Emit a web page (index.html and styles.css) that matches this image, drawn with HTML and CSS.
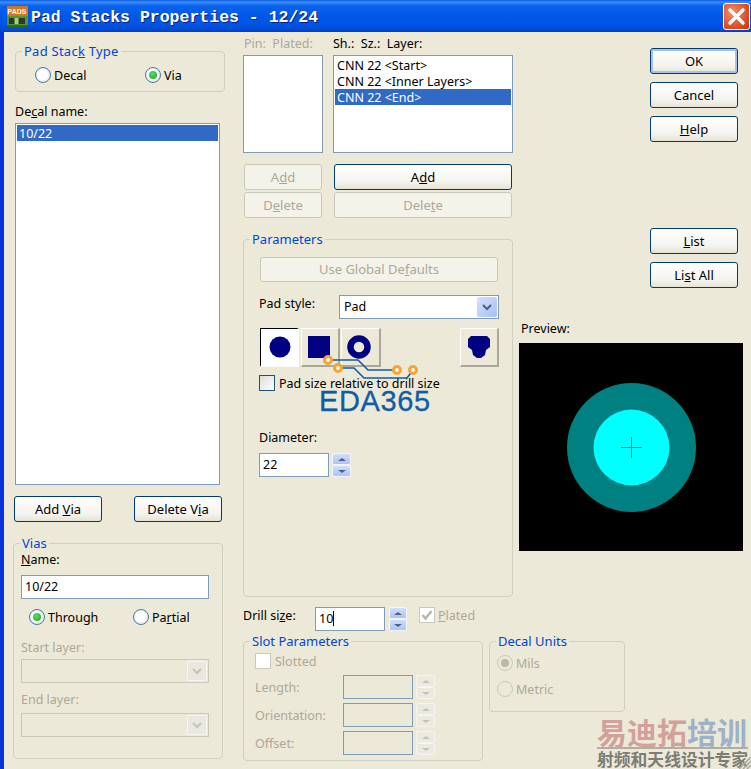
FILE: index.html
```html
<!DOCTYPE html>
<html lang="en">
<head>
<meta charset="utf-8">
<title>Pad Stacks Properties</title>
<link rel="stylesheet" href="styles.css">
</head>
<body>
<div class="window">
  <header class="titlebar">
    <svg class="app-icon" width="21" height="21" viewBox="0 0 21 21">
      <rect width="21" height="21" fill="#c8641a"/>
      <rect y="0" width="21" height="10" fill="#d8741c"/>
      <text x="0.5" y="8" class="app-icon-text">PADS</text>
      <rect x="0" y="10" width="21" height="11" fill="#4f9a2c"/>
      <rect x="2" y="12" width="5" height="6" fill="#333"/>
      <rect x="8" y="12" width="3" height="6" fill="#bbb"/>
      <rect x="12" y="12" width="6" height="6" fill="#333"/>
      <rect x="0" y="19" width="21" height="2" fill="#2c6a18"/>
    </svg>
    <h1 class="title">Pad Stacks Properties - 12/24</h1>
    <div class="close">
      <svg width="19" height="19" viewBox="0 0 19 19"><path d="M3 3 L16 16 M16 3 L3 16" stroke="#fff" stroke-width="3.4" stroke-linecap="round"/></svg>
    </div>
  </header>

  <main class="client">
    <section class="col-left">
      <div class="group type-group">
        <span class="legend legend-wide">Pad Stac<u>k</u> Type</span>
        <div class="radio-row">
          <label class="option type-option"><span class="radio"></span>Decal</label>
          <label class="option"><span class="radio on"></span>Via</label>
        </div>
      </div>
      <div class="lbl decal-label">De<u>c</u>al name:</div>
      <div class="list decal-list"><div class="item selected">10/22</div></div>
      <div class="via-buttons">
        <button class="btn via-btn">Add <u>V</u>ia</button>
        <button class="btn via-btn">Delete V<u>i</u>a</button>
      </div>
      <div class="group vias-group">
        <span class="legend">Vias</span>
        <div class="lbl"><u>N</u>ame:</div>
        <div class="input via-name">10/22</div>
        <div class="radio-row through-row">
          <label class="option through-option"><span class="radio on"></span>Throu<u>g</u>h</label>
          <label class="option"><span class="radio"></span>Pa<u>r</u>tial</label>
        </div>
        <div class="lbl off start-label">Start layer:</div>
        <div class="combo combo-off layer-combo"><span class="drop drop-off"><svg width="10" height="7" viewBox="0 0 10 7"><path d="M1 1 L5 5 L9 1" fill="none" stroke="#c4c2b8" stroke-width="2"/></svg></span></div>
        <div class="lbl off end-label">End layer:</div>
        <div class="combo combo-off layer-combo end-combo"><span class="drop drop-off"><svg width="10" height="7" viewBox="0 0 10 7"><path d="M1 1 L5 5 L9 1" fill="none" stroke="#c4c2b8" stroke-width="2"/></svg></span></div>
      </div>
    </section>

    <section class="col-mid">
      <div class="heads">
        <span class="lbl lbl-low off pin-head">Pin: &nbsp;Plated:</span>
        <span class="lbl lbl-low">Sh.: &nbsp;Sz.: &nbsp;Layer:</span>
      </div>
      <div class="lists">
        <div class="list pin-list"></div>
        <div class="list layer-list">
          <div class="item">CNN 22 &lt;Start&gt;</div>
          <div class="item">CNN 22 &lt;Inner Layers&gt;</div>
          <div class="item selected">CNN 22 &lt;End&gt;</div>
        </div>
      </div>
      <div class="stack-buttons">
        <button class="btn btn-off">A<u>d</u>d</button>
        <button class="btn">A<u>d</u>d</button>
        <button class="btn btn-off">D<u>e</u>lete</button>
        <button class="btn btn-off">Dele<u>t</u>e</button>
      </div>

      <div class="group params">
        <span class="legend">Parameters</span>
        <button class="btn btn-off global-btn">Use Global De<u>f</u>aults</button>
        <div class="pad-style">
          <span class="lbl lbl-low pad-style-label">Pad style:</span>
          <div class="combo pad-combo">Pad<span class="drop"><svg width="10" height="7" viewBox="0 0 10 7"><path d="M1 1 L5 5 L9 1" fill="none" stroke="#4d6185" stroke-width="2"/></svg></span></div>
        </div>
        <div class="pad-shapes">
          <span class="pad pressed"><svg class="shape-circle" width="22" height="22" viewBox="0 0 22 22"><circle cx="11" cy="11" r="10.5" fill="#000080"/></svg></span>
          <span class="pad"><svg class="shape-square" width="22" height="22" viewBox="0 0 22 22"><rect width="22" height="22" fill="#000080"/></svg></span>
          <span class="pad pad-ring"><svg class="shape-ring" width="24" height="24" viewBox="0 0 24 24"><circle cx="12" cy="12" r="8.5" fill="none" stroke="#000080" stroke-width="6.5"/></svg></span>
          <span class="pad pad-last"><svg width="22" height="22" viewBox="0 0 22 22"><path d="M3 0 H19 L22 3 V11 L18 14 L17 19 L13 22 H9 L5 19 L4 14 L0 11 V3 Z" fill="#000080"/></svg></span>
        </div>
        <label class="option relative-row"><span class="check"></span>Pad size relative to drill size</label>
        <div class="lbl diameter-label">Diameter:</div>
        <div class="field-row diameter-row">
          <div class="input num">22</div>
          <div class="spin"><span class="spin-btn"><i class="tri up"></i></span><span class="spin-btn"><i class="tri"></i></span></div>
        </div>
        <div class="eda-mark">
          <svg width="112" height="40" viewBox="0 0 112 40">
            <path d="M8 8 H38 L48 18 H77 M18 16 H34 L44 26 H87 L93 18" fill="none" stroke="#0f5ca8" stroke-width="1.6"/>
            <g fill="#fdf3e0" stroke="#f4a433" stroke-width="3"><circle cx="8" cy="8" r="3.5"/><circle cx="18" cy="16" r="3.5"/><circle cx="77" cy="18" r="3.5"/><circle cx="93" cy="18" r="3.5"/></g>
          </svg>
          <span class="eda-text">EDA365</span>
        </div>
      </div>

      <div class="drill-row">
        <span class="lbl lbl-low drill-label">Drill si<u>z</u>e:</span>
        <div class="input num">10<span class="caret"></span></div>
        <div class="spin drill-spin"><span class="spin-btn"><i class="tri up"></i></span><span class="spin-btn"><i class="tri"></i></span></div>
        <label class="option off plated"><span class="check check-off"><svg width="14" height="14" viewBox="0 0 14 14"><path d="M2.5 7 L5.5 10.5 L11.5 3" fill="none" stroke="#b9b8ab" stroke-width="2.6"/></svg></span><span><u>P</u>lated</span></label>
      </div>

      <div class="bottom-row">
        <div class="group slot">
          <span class="legend">Slot Parameters</span>
          <label class="option off"><span class="check check-off"></span>Slotted</label>
          <div class="field-row slot-row">
            <span class="lbl off slot-label">Length:</span>
            <div class="input input-off num"></div>
            <div class="spin"><span class="spin-btn spin-off"><i class="tri up"></i></span><span class="spin-btn spin-off"><i class="tri"></i></span></div>
          </div>
          <div class="field-row slot-row">
            <span class="lbl off slot-label">Orientation:</span>
            <div class="input input-off num"></div>
            <div class="spin"><span class="spin-btn spin-off"><i class="tri up"></i></span><span class="spin-btn spin-off"><i class="tri"></i></span></div>
          </div>
          <div class="field-row slot-row">
            <span class="lbl off slot-label">Offset:</span>
            <div class="input input-off num"></div>
            <div class="spin"><span class="spin-btn spin-off"><i class="tri up"></i></span><span class="spin-btn spin-off"><i class="tri"></i></span></div>
          </div>
        </div>
        <div class="group units">
          <span class="legend">Decal Units</span>
          <label class="option off"><span class="radio radio-off on"></span>Mils</label>
          <label class="option off metric"><span class="radio radio-off"></span>Metric</label>
        </div>
      </div>
    </section>

    <section class="col-right">
      <button class="btn side-btn default-btn">OK</button>
      <button class="btn side-btn">Cancel</button>
      <button class="btn side-btn"><u>H</u>elp</button>
      <button class="btn side-btn list-btn"><u>L</u>ist</button>
      <button class="btn side-btn">Li<u>s</u>t All</button>
      <div class="lbl preview-label">Preview:</div>
      <div class="preview">
        <svg width="224" height="208" viewBox="0 0 224 208">
          <circle cx="112.5" cy="104.5" r="64.5" fill="#008080"/>
          <circle cx="112.5" cy="104.5" r="38" fill="#00ffff"/>
          <path d="M112.5 94 V115 M102 104.5 H123" stroke="#008080" stroke-width="1"/>
        </svg>
      </div>
    </section>
  </main>

  <div class="brand">
    <div class="brand-main"><span class="brand-red">易迪拓</span><span class="brand-blue">培训</span></div>
    <div class="brand-sub">射频和天线设计专家</div>
  </div>
  <svg class="grip" width="12" height="12" viewBox="0 0 12 12"><path d="M0 12 L12 0 M4 12 L12 4 M8 12 L12 8" stroke="#a8a79a" stroke-width="1.5"/></svg>
</div>
</body>
</html>
```
FILE: styles.css
```css
* { box-sizing: border-box; }
html, body { margin: 0; padding: 0; }
body {
  width: 751px;
  height: 769px;
  overflow: hidden;
  font-family: "Noto Sans", "Liberation Sans", Arial, sans-serif;
  font-size: 12.5px;
  color: #000;
  background: #ece9d8;
}
u { text-decoration: underline; }

.window { position: relative; width: 751px; height: 769px; background: #ece9d8; overflow: hidden; }

.titlebar {
  height: 32px;
  display: flex;
  align-items: center;
  padding: 0 1px 0 7px;
  background: linear-gradient(#0a5ae0 0, #3d8efc 2px, #0a62ec 6px, #0058e6 16px, #0055e5 24px, #0149d4 30px, #0040c0 32px);
}
.app-icon { flex: none; margin-right: 3px; }
.app-icon-text { font: bold 7px "Liberation Sans", sans-serif; fill: #fff; }
.title {
  margin: 0;
  padding-top: 3px;
  flex: 1;
  font: bold 16.5px "Liberation Mono", monospace;
  color: #fff;
  text-shadow: 1px 1px 0 #0f1f80;
  white-space: nowrap;
}
.close {
  width: 27px;
  height: 27px;
  display: flex;
  align-items: center;
  justify-content: center;
  border: 1px solid #fff;
  border-radius: 3px;
  background: radial-gradient(circle at 35% 35%, #f0926c, #e0502a 60%, #c5370f);
}

.client { display: flex; height: 737px; border-left: 4px solid #0831d9; }
.col-left { flex: none; width: 228px; margin-left: 11px; }
.col-mid { flex: none; width: 276px; }
.col-right { flex: none; width: 224px; }

.lbl { display: block; height: 16px; line-height: 15px; white-space: nowrap; }
.lbl-low { line-height: 17px; }
.off { color: #aca899; }

.group {
  position: relative;
  border: 1px solid #d0d0bf;
  border-radius: 4px;
}
.legend {
  position: absolute;
  top: -9px;
  left: 6px;
  padding: 0 2px;
  height: 16px;
  line-height: 16px;
  font-size: 13px;
  background: #ece9d8;
  color: #0046d5;
  white-space: nowrap;
}
.legend-wide { letter-spacing: 0.25px; }

.option { display: flex; align-items: flex-start; height: 16px; line-height: 17px; white-space: nowrap; }
.radio {
  flex: none;
  width: 16px;
  height: 16px;
  margin-right: 3px;
  border: 1px solid #4a7a9f;
  border-radius: 50%;
  background: radial-gradient(circle at 40% 40%, #fff 45%, #dcd9ce);
  box-shadow: inset 0 0 0 1px #e8edf2;
  display: flex;
  align-items: center;
  justify-content: center;
}
.radio.on::after {
  content: "";
  width: 8px;
  height: 8px;
  border-radius: 50%;
  background: radial-gradient(circle at 40% 35%, #55de5c, #21a52d);
}
.radio-off { border-color: #cac8bb; background: #ece9d8; box-shadow: none; }
.radio-off.on::after { background: #b9b8ab; }
.radio-row { display: flex; }
.type-group { width: 210px; height: 41px; margin-top: 19px; padding: 15px 0 0 19px; }
.type-option { width: 110px; }

.decal-label { margin-top: 12px; }
.list { border: 1px solid #7f9db9; background: #fff; padding: 2px; }
.decal-list { width: 205px; height: 362px; margin-top: 3px; padding: 1px; }
.item { height: 16px; line-height: 17px; padding-left: 2px; white-space: nowrap; }
.selected { background: #316ac5; color: #fff; }

.via-buttons { display: flex; gap: 32px; margin: 11px 0 0 -1px; }
.via-btn { width: 88px; height: 26px; }

.btn {
  display: block;
  padding: 0;
  height: 26px;
  font: inherit;
  font-size: 13px;
  color: #000;
  border: 1px solid #003c74;
  border-radius: 3px;
  background: linear-gradient(#fff, #f4f3ee 70%, #e6e3d6);
  white-space: nowrap;
}
.btn-off {
  color: #aca899;
  border-color: #cac8bb;
  background: #f4f3ea;
}

.vias-group { width: 210px; height: 216px; margin: 21px 0 0 -2px; padding: 8px 0 0 7px; }
.input {
  height: 24px;
  line-height: 22px;
  padding-left: 3px;
  border: 1px solid #7f9db9;
  background: #fff;
  white-space: nowrap;
}
.input-off { background: #ece9d8; }
.via-name { width: 188px; margin-top: 7px; }
.through-row { margin: 10px 0 0 8px; }
.through-option { width: 104px; }
.start-label { margin-top: 15px; }
.end-label { margin-top: 9px; }
.layer-combo { width: 188px; margin-top: 3px; }
.end-combo { margin-top: 5px; }

.combo {
  position: relative;
  height: 24px;
  line-height: 22px;
  padding-left: 4px;
  border: 1px solid #7f9db9;
  background: #fff;
}
.combo-off { border-color: #cac8bb; background: #ece9d8; }
.drop {
  position: absolute;
  top: 1px;
  right: 1px;
  width: 20px;
  height: 20px;
  display: flex;
  align-items: center;
  justify-content: center;
  border-radius: 2px;
  background: linear-gradient(135deg, #d4e0fc, #a9bff5);
}
.drop-off { background: #e9e7df; box-shadow: inset 0 0 0 1px #f6f5f0; }

.heads { display: flex; margin: 3px 0 0 1px; height: 16px; }
.pin-head { width: 89px; }
.lists { display: flex; gap: 10px; margin-top: 4px; }
.pin-list { width: 80px; height: 98px; }
.layer-list { width: 180px; height: 98px; padding: 1px; }

.stack-buttons {
  display: grid;
  grid-template-columns: 78px 178px;
  column-gap: 12px;
  row-gap: 2px;
  margin: 11px 0 0 1px;
}

.params { width: 270px; height: 358px; margin-top: 21px; padding: 17px 0 0 16px; }
.global-btn { width: 238px; height: 25px; padding-bottom: 2px; }
.pad-style { display: flex; align-items: flex-start; margin: 13px 0 0 -1px; }
.pad-style-label { width: 80px; }
.pad-combo { width: 160px; }
.pad-shapes { display: flex; width: 239px; margin-top: 9px; gap: 2px; }
.pad {
  width: 39px;
  height: 39px;
  flex: none;
  display: flex;
  align-items: center;
  justify-content: center;
  border-style: solid;
  border-width: 1px 2px 2px 1px;
  border-color: #fff #aca899 #aca899 #fff;
}
.pad-ring { margin-left: -1px; width: 40px; }
.pad-last { margin-left: auto; }
.pressed { background: #fff; border-color: #000 #fff #fff #000; border-width: 1px 2px 2px 1px; }
.shape-circle { margin-left: 2px; }
.shape-square { margin-right: 2px; }
.shape-ring { margin-right: 4px; }

.check {
  flex: none;
  width: 16px;
  height: 16px;
  margin-right: 4px;
  border: 1px solid #1c5180;
  background: linear-gradient(135deg, #dcdcd7, #fff);
}
.check-off { display: flex; align-items: center; justify-content: center; border-color: #cac8bb; background: #fff; }
.relative-row { margin: 8px 0 0 -1px; }
.diameter-label { margin: 39px 0 0 -1px; }
.field-row { display: flex; }
.diameter-row { margin: 7px 0 0 -1px; }
.num { width: 70px; flex: none; }
.spin { flex: none; width: 19px; height: 24px; margin-left: 3px; display: flex; flex-direction: column; }
.spin-btn {
  flex: 1;
  display: flex;
  align-items: center;
  justify-content: center;
  border: 1px solid #f2f5fd;
  border-radius: 2px;
  background: linear-gradient(#d2defb, #aec3f5);
}
.spin-off { background: #ebe9e0; border-color: #f5f4ee; }
.tri {
  width: 0;
  height: 0;
  border-left: 4px solid transparent;
  border-right: 4px solid transparent;
  border-top: 3px solid #4d6185;
}
.tri.up { border-top: 0; border-bottom: 3px solid #4d6185; }
.spin-off .tri { border-top-color: #c4c2b8; border-bottom-color: #c4c2b8; }

.eda-mark {
  position: absolute;
  left: 76px;
  top: 112px;
  width: 112px;
  height: 62px;
  pointer-events: none;
}
.eda-mark svg { position: absolute; left: 0; top: 0; }
.eda-text {
  position: absolute;
  left: -1px;
  top: 35px;
  font: 29px/28px "Liberation Sans", sans-serif;
  color: #0f5ca8;
  letter-spacing: 0.6px;
  -webkit-text-stroke: 0.3px #0f5ca8;
}

.drill-row { display: flex; margin-top: 10px; height: 24px; }
.drill-label { width: 72px; }
.drill-spin { width: 18px; margin-left: 4px; }
.caret { display: inline-block; width: 1px; height: 15px; background: #000; vertical-align: -3px; }
.plated { margin-left: 12px; height: 18px; }
.plated .check { margin-right: 3px; }

.bottom-row { display: flex; gap: 6px; width: 382px; margin-top: 10px; }
.slot { flex: none; width: 240px; height: 120px; padding: 11px 0 0 11px; }
.slot-row { margin-top: 4px; }
.slot > .option + .slot-row { margin-top: 6px; }
.slot-label { width: 88px; line-height: 26px; height: 24px; }
.units { flex: none; width: 136px; height: 71px; padding: 13px 0 0 7px; }
.metric { margin-top: 10px; }

.side-btn { width: 88px; margin: 8px 0 0 131px; }
.default-btn { margin-top: 16px; box-shadow: inset 0 0 0 2px #a9c0ea; }
.list-btn { margin-top: 86px; }
.preview-label { margin: 33px 0 0 2px; }
.preview { width: 224px; height: 208px; margin-top: 6px; background: #000; }
.preview svg { display: block; }

.brand { position: absolute; right: 0; bottom: 0; width: 154px; }
.brand-main {
  height: 31px;
  width: 151px;
  border-bottom: 2px solid #b0aea0;
  font: bold 30px/26px "Noto Sans CJK SC", sans-serif;
  white-space: nowrap;
}
.brand-red { color: #d3a19c; }
.brand-blue { color: #9db2c6; }
.brand-sub {
  height: 20px;
  font: bold 16.8px/21px "Noto Sans CJK SC", sans-serif;
  color: #7d7d75;
  white-space: nowrap;
}
.grip { position: absolute; right: 0; bottom: 0; }
```
